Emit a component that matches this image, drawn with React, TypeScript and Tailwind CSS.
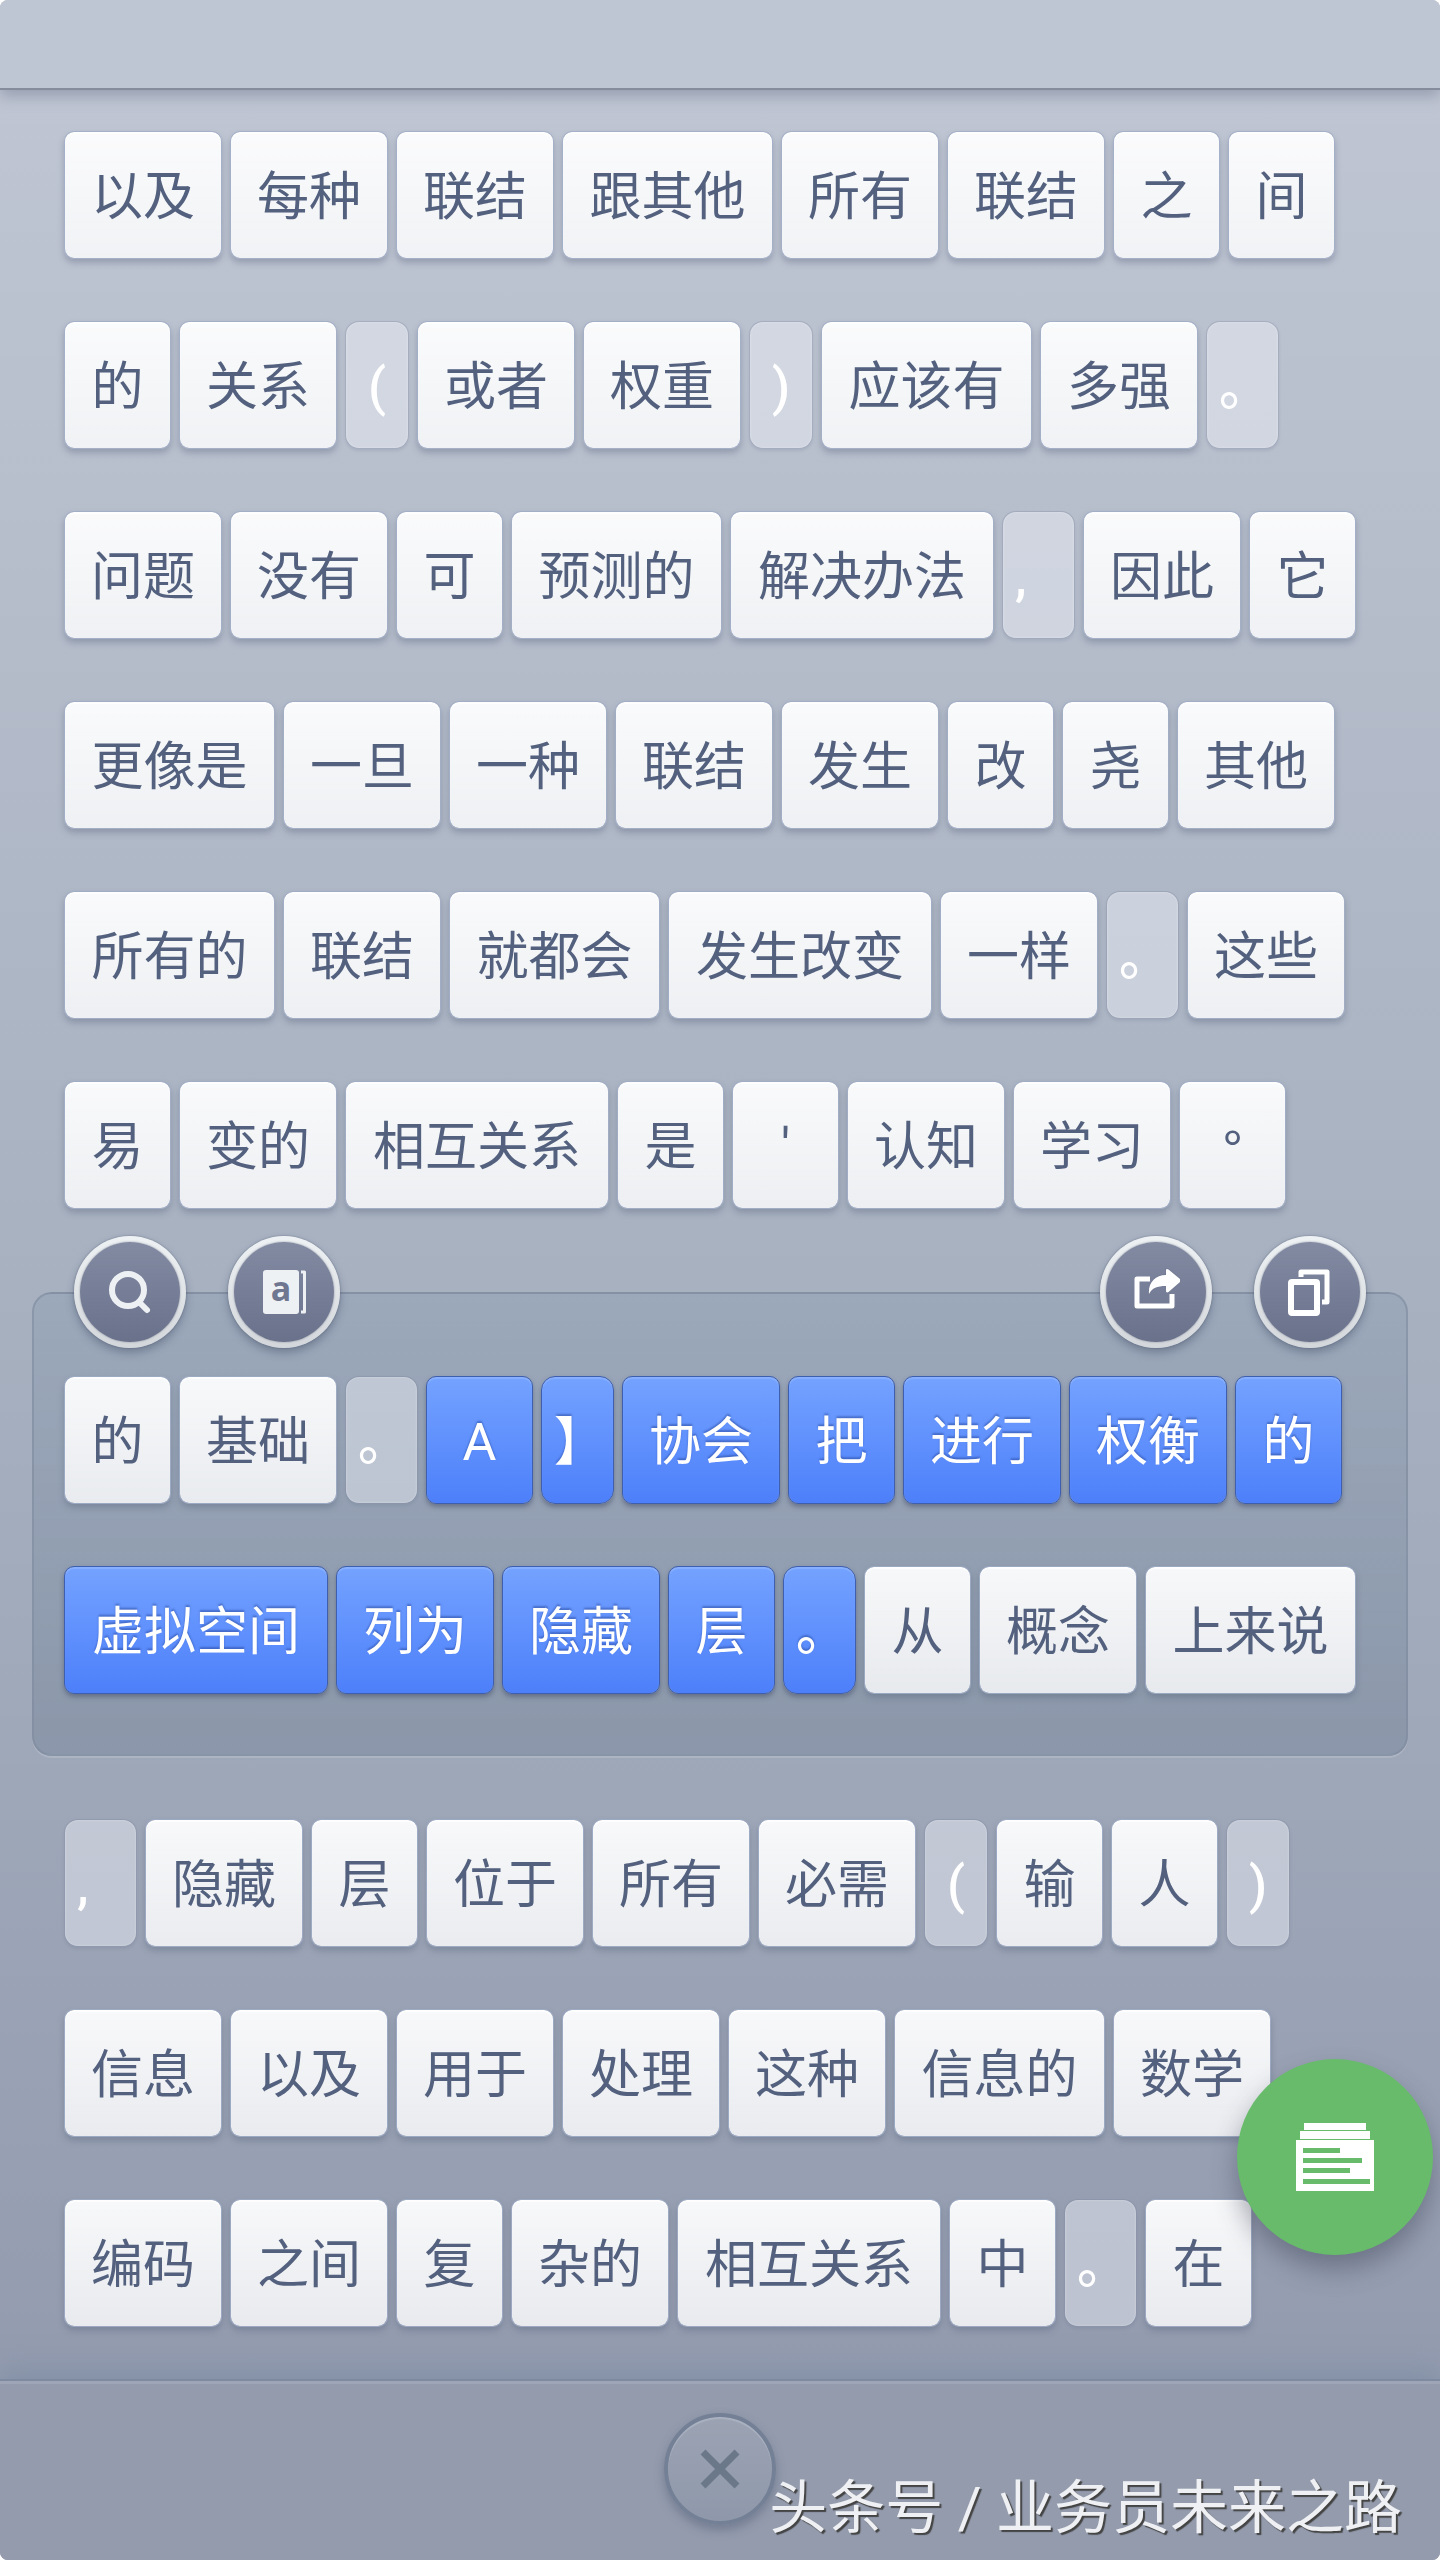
import { useState } from "react";
import type { ReactNode } from "react";
import clsx from "clsx";

type Kind = "word" | "mark" | "bracket";

interface Token {
  text: string;
  kind: Kind;
}

// "~" prefix: full width punctuation, "^" prefix: narrow bracket
function parse(source: string): Token[] {
  return source.split(" ").map((part) => {
    if (part.startsWith("~")) return { text: part.slice(1), kind: "mark" };
    if (part.startsWith("^")) return { text: part.slice(1), kind: "bracket" };
    return { text: part, kind: "word" };
  });
}

const before = parse(
  "以及 每种 联结 跟其他 所有 联结 之 间 的 关系 ^( 或者 权重 ^) 应该有 多强 ~。 问题 没有 可 预测的 解决办法 ~, 因此 它 更像是 一旦 一种 联结 发生 改 尧 其他 所有的 联结 就都会 发生改变 一样 ~。 这些 易 变的 相互关系 是 ' 认知 学习 °"
);
const active = parse(
  "的 基础 ~。 A ~】 协会 把 进行 权衡 的 虚拟空间 列为 隐藏 层 ~。 从 概念 上来说"
);
const after = parse(
  "~, 隐藏 层 位于 所有 必需 ^( 输 人 ^) 信息 以及 用于 处理 这种 信息的 数学 编码 之间 复 杂的 相互关系 中 ~。 在"
);

const wordWidths: Record<number, string> = {
  1: "w-[107px]",
  2: "w-[158px]",
  3: "w-[211px]",
  4: "w-[264px]",
};

interface TileProps {
  token: Token;
  selected?: boolean;
  onToggle?: () => void;
}

function Tile({ token, selected = false, onToggle }: TileProps) {
  const { text, kind } = token;
  return (
    <button
      type="button"
      aria-pressed={selected}
      onClick={onToggle}
      className={clsx(
        "flex h-32 shrink-0 items-center border bg-clip-padding pt-[5px] text-[52px] leading-none whitespace-nowrap",
        kind === "word" && wordWidths[text.length],
        kind === "mark" && "w-[73px] px-3",
        kind === "bracket" && "w-16",
        kind === "mark" ? "justify-start" : "justify-center",
        kind === "word" ? "rounded-[10px]" : "rounded-[14px] font-medium",
        text === "°" && "font-['Noto_Sans_CJK_SC',sans-serif]",
        selected &&
          "border-[#3e5fae] bg-linear-to-b from-[#74a2ff] to-[#4d7ffa] text-white shadow-[inset_0_2px_1px_rgba(150,185,255,0.6),0_3px_5px_rgba(50,60,90,0.45)] text-shadow-[0_-2px_2px_rgba(30,60,140,0.45)]",
        !selected &&
          kind === "word" &&
          "border-[#9dabc6]/80 bg-linear-to-b from-white/93 to-white/79 text-[#53617f] shadow-[inset_0_2px_1px_rgba(255,255,255,0.8),0_4px_6px_rgba(80,92,118,0.35)]",
        !selected &&
          kind !== "word" &&
          "border-[#78829b]/30 bg-[#f2f4fb]/44 text-white shadow-[inset_0_0_2px_rgba(255,255,255,0.5),0_2px_3px_rgba(80,92,118,0.15)]"
      )}
    >
      {text}
    </button>
  );
}

function TileFlow({ children }: { children: ReactNode }) {
  return <div className="flex flex-wrap gap-x-2 gap-y-[62px]">{children}</div>;
}

function RoundButton({
  label,
  children,
}: {
  label: string;
  children: ReactNode;
}) {
  return (
    <button
      type="button"
      aria-label={label}
      className="size-28 rounded-full bg-linear-to-b from-[#eef2f4] to-[#d3d7db] p-[6px] shadow-[0_0_2px_rgba(70,80,105,0.6),0_5px_8px_rgba(60,70,95,0.4)]"
    >
      <span className="flex size-full items-center justify-center rounded-full bg-linear-to-b from-[#838ba3] to-[#6a718b] shadow-[0_0_2px_rgba(70,76,100,0.6)]">
        {children}
      </span>
    </button>
  );
}

function SearchIcon() {
  return (
    <svg width="48" height="48" viewBox="0 0 48 48" fill="none">
      <circle cx="22" cy="22" r="16" stroke="#eef1f4" strokeWidth="6" />
      <path
        d="M34 35 L41 42"
        stroke="#eef1f4"
        strokeWidth="6"
        strokeLinecap="round"
      />
    </svg>
  );
}

function DictionaryIcon() {
  return (
    <svg
      width="48"
      height="48"
      viewBox="0 0 48 48"
      className="overflow-visible"
    >
      <rect x="3" y="2" width="36" height="44" rx="3" fill="#eef1f4" />
      <path
        d="M41 4 H44.500 V44 H41"
        fill="none"
        stroke="#eef1f4"
        strokeWidth="3"
        strokeLinejoin="round"
      />
      <text
        x="21"
        y="33"
        textAnchor="middle"
        fontSize="34"
        fill="#6f7690"
        className="font-['Open_Sans',sans-serif] font-bold"
      >
        a
      </text>
    </svg>
  );
}

function ShareIcon() {
  return (
    <svg width="48" height="48" viewBox="0 0 48 48">
      <path
        d="M18 11 H5 V38 H40 V26"
        fill="none"
        stroke="#fff"
        strokeWidth="5"
        strokeLinejoin="round"
      />
      <path
        d="M34 1.500 Q35 .5 36.500 1.500 L48 11 Q49 12.500 48 14 L36.500 24 Q35 25 34 23.500 V18 C25 18 20 20 17 26 C16 15 23 7 34 7 Z"
        fill="#fff"
        stroke="#767d96"
        strokeWidth="2"
        paintOrder="stroke"
      />
    </svg>
  );
}

function CopyIcon() {
  return (
    <svg
      width="48"
      height="48"
      viewBox="0 0 48 48"
      fill="none"
      stroke="#fff"
      strokeLinejoin="round"
    >
      <rect x="5" y="14" width="26" height="31" rx="1" strokeWidth="6" />
      <path d="M15 9 V4 H41 V34 H36" strokeWidth="5" />
    </svg>
  );
}

function CardsIcon() {
  return (
    <svg width="78" height="68" viewBox="0 0 78 68">
      <rect x="8" y="0" width="62" height="7" fill="#fff" />
      <rect x="4" y="8" width="70" height="8" fill="#fdfdfd" />
      <rect x="0" y="17" width="78" height="51" fill="#fff" />
      <g fill="#68bb6b">
        <rect x="7" y="25" width="37" height="5" />
        <rect x="7" y="35" width="59" height="5" />
        <rect x="7" y="45" width="47" height="5" />
        <rect x="7" y="56" width="67" height="5" />
      </g>
    </svg>
  );
}

export default function App() {
  const [range, setRange] = useState<number[]>([
    3, 4, 5, 6, 7, 8, 9, 10, 11, 12, 13, 14,
  ]);

  function toggle(index: number) {
    setRange((prev) =>
      prev.includes(index) ? prev.filter((i) => i !== index) : [...prev, index]
    );
  }

  return (
    <div className="bg-white">
      <div className="relative flex flex-col overflow-hidden rounded-lg bg-linear-to-b from-[#c1c7d4] via-[#a7b1c0] to-[#9098ac] font-[Roboto,'Noto_Sans_CJK_SC',sans-serif]">
        <header className="h-[90px] border-b-2 border-[#858d9d] bg-[#bfc6d3] shadow-[0_6px_14px_rgba(90,100,125,0.4)]" />

        <main className="pt-[41px] pb-[52px]">
          <div className="px-16">
            <TileFlow>
              {before.map((token, i) => (
                <Tile key={i} token={token} />
              ))}
            </TileFlow>
          </div>

          <section className="relative mx-8 mt-[83px] mb-[63px] rounded-[20px] border-2 border-[#7f8b9f]/60 bg-linear-to-b from-[#8c9db3]/40 to-[#78879b]/50 px-[30px] pt-[82px] pb-[60px] shadow-[0_2px_0_rgba(255,255,255,0.15)]">
            <div className="absolute inset-x-10 -top-[58px] flex justify-between">
              <div className="flex gap-[42px]">
                <RoundButton label="搜索">
                  <SearchIcon />
                </RoundButton>
                <RoundButton label="词典">
                  <DictionaryIcon />
                </RoundButton>
              </div>
              <div className="flex gap-[42px]">
                <RoundButton label="分享">
                  <ShareIcon />
                </RoundButton>
                <RoundButton label="复制">
                  <CopyIcon />
                </RoundButton>
              </div>
            </div>
            <TileFlow>
              {active.map((token, i) => (
                <Tile
                  key={i}
                  token={token}
                  selected={range.includes(i)}
                  onToggle={() => toggle(i)}
                />
              ))}
            </TileFlow>
          </section>

          <div className="px-16">
            <TileFlow>
              {after.map((token, i) => (
                <Tile key={i} token={token} />
              ))}
            </TileFlow>
          </div>
        </main>

        <footer className="relative flex h-[181px] justify-center border-t-2 border-[#7d8aa0] bg-[#939bad] pt-8 shadow-[inset_0_3px_0_rgba(160,168,185,0.8),0_-10px_24px_rgba(115,135,160,0.5)]">
          <button
            type="button"
            aria-label="关闭"
            className="flex size-28 items-center justify-center rounded-full border-4 border-[#748096] bg-linear-to-b from-[#9ba3b3] to-[#8f98aa] shadow-[inset_0_2px_1px_rgba(175,183,198,0.8),0_5px_10px_rgba(85,95,120,0.5)]"
          >
            <svg width="40" height="40" viewBox="0 0 40 40">
              <path
                d="M3 3 L37 37 M37 3 L3 37"
                stroke="#6b788a"
                strokeWidth="7"
              />
            </svg>
          </button>
          <p className="absolute right-[38px] bottom-3 text-[58px] leading-[80px] whitespace-nowrap text-[#eff0f3] text-shadow-[2px_2px_1px_#444444]">
            头条号 / 业务员未来之路
          </p>
        </footer>

        <button
          type="button"
          aria-label="卡片"
          className="absolute right-[7px] bottom-[305px] flex size-[196px] items-center justify-center rounded-full bg-[#68bb6b] shadow-[0_14px_26px_rgba(60,65,85,0.45)]"
        >
          <CardsIcon />
        </button>
      </div>
    </div>
  );
}
